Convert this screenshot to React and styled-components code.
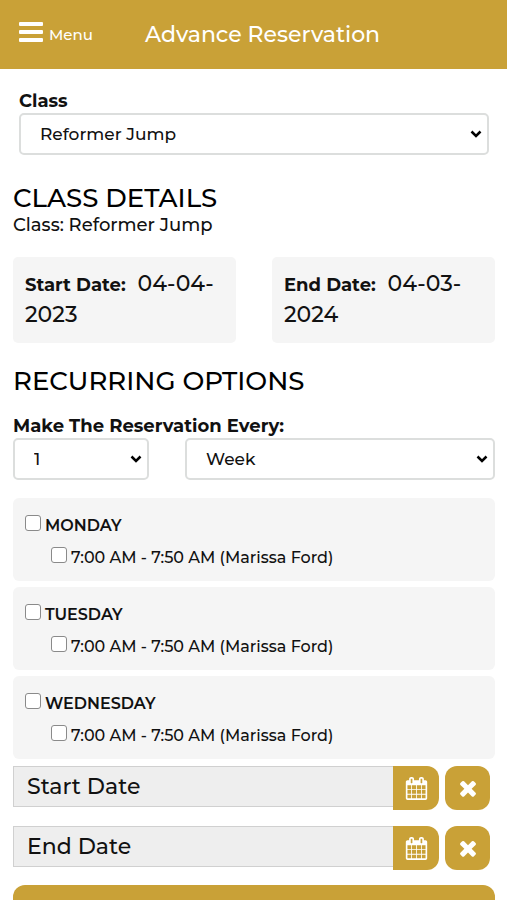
import React, {useState} from 'react';
import styled, {createGlobalStyle} from "styled-components";

const gold = "#c9a137"
const panel = "#f5f5f5"

const days = [
    {id: "monday", name: "MONDAY", slot: "7:00 AM - 7:50 AM (Marissa Ford)"},
    {id: "tuesday", name: "TUESDAY", slot: "7:00 AM - 7:50 AM (Marissa Ford)"},
    {id: "wednesday", name: "WEDNESDAY", slot: "7:00 AM - 7:50 AM (Marissa Ford)"},
]

const MenuIcon = () => (
    <svg width="24" height="20" viewBox="0 0 24 20" fill="currentColor" aria-hidden="true">
        <rect width="24" height="4" rx="1"/>
        <rect y="8" width="24" height="4" rx="1"/>
        <rect y="16" width="24" height="4" rx="1"/>
    </svg>
)

const CalendarIcon = () => (
    <svg width="23" height="23" viewBox="0 0 1792 1792" fill="currentColor" aria-hidden="true">
        <path d="M192 1664h288v-288h-288v288zm352 0h320v-288h-320v288zm-352-352h288v-320h-288v320zm352 0h320v-320h-320v320zm-352-384h288v-288h-288v288zm736 736h320v-288h-320v288zm-384-736h320v-288h-320v288zm768 736h288v-288h-288v288zm-384-352h320v-320h-320v320zm-352-864v-288q0-13-9.500-22.500t-22.500-9.500h-64q-13 0-22.500 9.500t-9.500 22.500v288q0 13 9.500 22.500t22.500 9.500h64q13 0 22.500-9.500t9.500-22.500zm736 864h288v-320h-288v320zm-384-384h320v-288h-320v288zm384 0h288v-288h-288v288zm32-480v-288q0-13-9.500-22.500t-22.500-9.500h-64q-13 0-22.500 9.500t-9.500 22.500v288q0 13 9.500 22.500t22.500 9.500h64q13 0 22.500-9.500t9.500-22.500zm384-64v1280q0 52-38 90t-90 38h-1408q-52 0-90-38t-38-90v-1280q0-52 38-90t90-38h128v-96q0-66 47-113t113-47h64q66 0 113 47t47 113v96h384v-96q0-66 47-113t113-47h64q66 0 113 47t47 113v96h128q52 0 90 38t38 90z"/>
    </svg>
)

const ClearIcon = () => (
    <svg width="24" height="24" viewBox="0 0 1792 1792" fill="currentColor" aria-hidden="true">
        <path d="M1490 1322q0 40-28 68l-136 136q-28 28-68 28t-68-28l-294-294-294 294q-28 28-68 28t-68-28l-136-136q-28-28-28-68t28-68l294-294-294-294q-28-28-28-68t28-68l136-136q28-28 68-28t68 28l294 294 294-294q28-28 68-28t68 28l136 136q28 28 28 68t-28 68l-294 294 294 294q28 28 28 68z"/>
    </svg>
)

const Dropdown = ({id, options, label}) => (
    <SelectBox>
        <Select id={id} aria-label={label}>
            {options.map(o => <option key={o}>{o}</option>)}
        </Select>
        <Chevron viewBox="0 0 12 8" aria-hidden="true">
            <path d="M1.500 1.500 6 6l4.500-4.500" fill="none" stroke="#000" strokeWidth="2.500"/>
        </Chevron>
    </SelectBox>
)

const DateField = ({id, label}) => {
    const [value, setValue] = useState("")
    return (
        <DateRow>
            <DateInput id={id} aria-label={label} placeholder={label} value={value} readOnly/>
            <IconButton $attached aria-label={`Pick ${label}`}><CalendarIcon/></IconButton>
            <IconButton aria-label={`Clear ${label}`} onClick={() => setValue("")}><ClearIcon/></IconButton>
        </DateRow>
    )
}

const App = () => {
    return (
        <>
            <GlobalStyle/>
            <Header>
                <MenuButton><MenuIcon/><MenuText>Menu</MenuText></MenuButton>
                <Title>Advance Reservation</Title>
            </Header>
            <Main>
                <ClassField>
                    <FieldLabel htmlFor="class">Class</FieldLabel>
                    <Dropdown id="class" options={["Reformer Jump"]}/>
                </ClassField>

                <Section>
                    <Heading>CLASS DETAILS</Heading>
                    <Detail>Class: Reformer Jump</Detail>
                    <DateCards>
                        <DateCard><CardLabel>Start Date:</CardLabel>&nbsp; 04-04-2023</DateCard>
                        <DateCard><CardLabel>End Date:</CardLabel>&nbsp; 04-03-2024</DateCard>
                    </DateCards>
                </Section>

                <Section>
                    <Heading>RECURRING OPTIONS</Heading>
                    <Every>
                        <FieldLabel htmlFor="every">Make The Reservation Every:</FieldLabel>
                        <EveryRow>
                            <Dropdown id="every" options={["1", "2", "3", "4"]}/>
                            <Dropdown id="unit" label="Unit" options={["Week", "Month"]}/>
                        </EveryRow>
                    </Every>
                </Section>

                <Stack>
                    {days.map(day => (
                        <DayCard key={day.id}>
                            <Check $bold><Box type="checkbox"/>{day.name}</Check>
                            <Check $nested><Box type="checkbox"/>{day.slot}</Check>
                        </DayCard>
                    ))}
                </Stack>

                <Dates>
                    <DateField id="start" label="Start Date"/>
                    <DateField id="end" label="End Date"/>
                </Dates>
                <SubmitButton aria-label="Reserve"/>
            </Main>
        </>
    );
};

const GlobalStyle = createGlobalStyle`
* {
    box-sizing: border-box;
}
body {
    margin: 0;
    background: #fff;
    color: #111;
}
body, button, input, select {
    font-family: Montserrat, Inter, "Liberation Sans", sans-serif;
    font-weight: 500;
}
`

//-----------Header---------
const Header = styled.header`
display: flex;
align-items: center;
justify-content: center;
position: relative;
height: 69px;
background: ${gold};
color: #fff;
`
const MenuButton = styled.button`
display: flex;
align-items: flex-start;
gap: 6px;
position: absolute;
top: 22px;
left: 19px;
padding: 0;
border: none;
background: none;
color: #fff;
font-size: 15px;
cursor: pointer;
`
const MenuText = styled.span`
padding-top: 4px;
line-height: 18px;
`
const Title = styled.h1`
margin: 0;
padding-left: 18px;
font-size: 22px;
font-weight: 500;
line-height: 30px;
`

//-----------Form---------
const Main = styled.main`
padding: 21px 12px 0 13px;
`
const ClassField = styled.div`
padding: 0 6px;
`
const FieldLabel = styled.label`
display: block;
font-size: 18px;
font-weight: 700;
line-height: 23px;
`
const SelectBox = styled.div`
position: relative;
`
const Select = styled.select`
display: block;
width: 100%;
height: 42px;
padding: 0 24px 0 19px;
border: 2px solid #dcdedd;
border-radius: 5px;
background: #fff;
color: #111;
font-size: 17px;
appearance: none;
`
const Chevron = styled.svg`
position: absolute;
top: 17px;
right: 7px;
width: 12px;
height: 8px;
pointer-events: none;
`
const Section = styled.section`
padding-top: 27px;
`
const Heading = styled.h2`
margin: 0;
color: #000;
font-size: 26px;
font-weight: 500;
line-height: 32px;
`
const Detail = styled.p`
margin: 0;
font-size: 18px;
line-height: 22px;
`
const DateCards = styled.div`
display: grid;
grid-template-columns: 1fr 1fr;
gap: 36px;
margin-top: 21px;
margin-bottom: -5px;
`
const DateCard = styled.div`
padding: 11px 12px 13px;
border-radius: 5px;
background: ${panel};
font-size: 22px;
line-height: 31px;
`
const CardLabel = styled.span`
font-size: 18px;
font-weight: 700;
line-height: 20px;
`
const Every = styled.div`
padding-top: 18px;
`
const EveryRow = styled.div`
display: grid;
grid-template-columns: 136fr 310fr;
gap: 36px;
`

//-----------Days---------
const Stack = styled.div`
display: grid;
gap: 6px;
margin-top: 18px;
`
const DayCard = styled.div`
padding: 12px 12px 7px;
border-radius: 6px;
background: ${panel};
`
const Check = styled.label`
display: flex;
align-items: center;
gap: 4px;
padding-left: ${p => p.$nested ? "26px" : "0"};
font-size: 16px;
font-weight: ${p => p.$bold ? 600 : 500};
line-height: 32px;
`
const Box = styled.input`
width: 16px;
height: 16px;
margin: 0 0 6px;
border: 1px solid #8a8a8a;
border-radius: 3px;
background: #fff;
appearance: none;

&:checked {
    background: ${gold};
}
`

//-----------Dates---------
const Dates = styled.div`
display: grid;
gap: 16px;
padding: 7px 5px 15px 0;
`
const DateRow = styled.div`
display: flex;
align-items: flex-start;
`
const DateInput = styled.input`
flex: 1;
min-width: 0;
height: 41px;
padding: 0 13px;
border: 1px solid #d0d0d0;
border-right: none;
border-radius: 0;
background: #eee;
color: #111;
font-size: 22px;

&::placeholder {
    color: #111;
    opacity: 1;
}
`
const IconButton = styled.button`
display: flex;
align-items: center;
justify-content: center;
width: ${p => p.$attached ? "46px" : "45px"};
height: 44px;
margin-right: ${p => p.$attached ? "6px" : "0"};
padding: 0;
border: none;
border-radius: ${p => p.$attached ? "0 12px 12px 0" : "12px"};
background: ${gold};
color: #fff;
cursor: pointer;
`
const SubmitButton = styled.button`
display: block;
width: 100%;
height: 46px;
border: none;
border-radius: 12px;
background: ${gold};
cursor: pointer;
`

export default App;
